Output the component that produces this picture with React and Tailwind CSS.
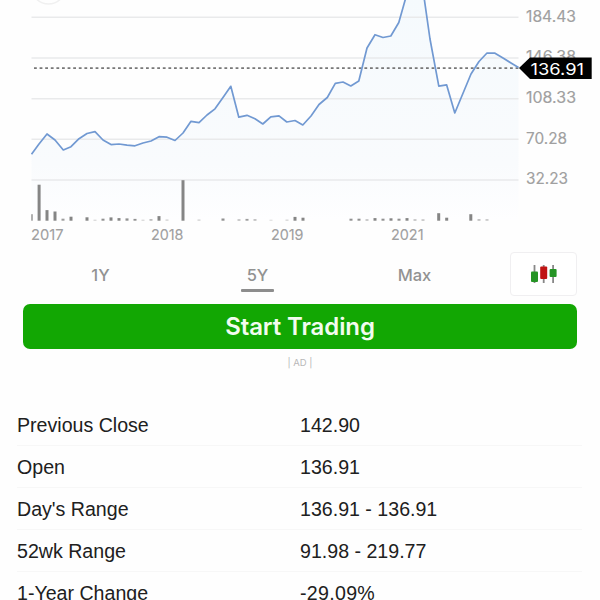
const line = [
  [31.5, 154.3], [39, 144], [47, 134], [55, 140], [63.3, 150], [71, 146.7], [79, 138.7], [87, 133.5],
  [95, 131.7], [103, 140], [111, 144.6], [119, 144], [127, 145.2], [135, 145.8], [143, 143], [151, 141],
  [159, 136.7], [167, 137.2], [175, 140.5], [183, 133], [191, 121.3], [199, 122.7], [207, 115], [215, 108.8],
  [223, 97.5], [230.8, 86.3], [238.8, 117.2], [247, 115.3], [255, 118.8], [262.8, 124], [270.8, 116.8],
  [279, 115.8], [286.8, 122], [295, 120.5], [302.8, 125], [311, 116], [319, 104.5], [327.3, 97.5],
  [335.3, 83.3], [343, 82], [350.8, 86], [358.8, 81], [367, 48], [375, 34.7], [383, 37.5], [390.8, 36],
  [398.8, 22.5], [406, -3], [424, -3], [430, 39], [438.8, 86.2], [446.6, 84.8], [454.8, 113], [471, 74],
  [479, 61.5], [487, 53], [495, 53.2], [503, 58], [511, 63], [518.5, 67.5],
];

// Volume bars as [x centre, height, opacity]
const bars = [
  [32, 6.5, 0.8], [39.1, 36, 1], [47, 10.6, 1], [55, 9.2, 1], [63, 2, 0.8], [71, 4, 1], [87, 3.4, 1],
  [95, 1, 0.4], [103, 2, 0.9], [111, 3.3, 1], [119, 2.6, 1], [127, 2.3, 0.9], [135, 1.8, 0.9],
  [143, 1, 0.4], [151, 1.6, 0.6], [159, 4.6, 1], [167, 1.2, 0.4], [183, 40.5, 1], [199, 1.2, 0.4],
  [223, 2.2, 0.9], [239, 1.4, 0.6], [247, 1.8, 0.8], [255, 1.5, 0.6], [271, 1, 0.3], [287, 1.1, 0.4],
  [295, 3.8, 1], [303, 3, 1], [351, 2, 0.9], [359, 2, 0.9], [367, 1.4, 0.6], [375, 2.6, 1],
  [383, 2, 0.9], [391, 2.4, 1], [399, 2, 0.9], [407, 2.6, 1], [415, 1.4, 0.6], [423, 1.3, 0.6],
  [438.7, 7.5, 1], [446.7, 3, 1], [470.8, 6.5, 1], [479, 1.5, 0.6], [487, 1.5, 0.5],
];

const gridLines = [17.2, 58, 98.7, 139.2, 180];
const prices = [
  ["184.43", 21.6, 50], ["146.38", 62.4, 50], ["108.33", 103, 50], ["70.28", 143.6, 41], ["32.23", 184.4, 42],
];
const years = [["2017", 31], ["2018", 151], ["2019", 271], ["2021", 391]];

const rows = [
  ["Previous Close", "142.90"],
  ["Open", "136.91"],
  ["Day's Range", "136.91 - 136.91"],
  ["52wk Range", "91.98 - 219.77"],
  ["1-Year Change", "-29.09%"],
];

const points = line.map((p) => p.join(",")).join(" ");

function Chart() {
  return (
    <svg width="600" height="250" viewBox="0 0 600 250" className="block shrink-0 font-['Inter',sans-serif]">
      <defs>
        <linearGradient id="area" x1="0" y1="0" x2="0" y2="1">
          <stop offset="0" stopColor="#f5fafd" />
          <stop offset="0.75" stopColor="#f9fbfd" />
          <stop offset="1" stopColor="#fefeff" />
        </linearGradient>
      </defs>
      <circle cx="48.5" cy="-13" r="17" fill="none" stroke="#f0f0f0" strokeWidth="1.5" />
      <polygon points={`31.5,220 ${points} 518.5,220`} fill="url(#area)" />
      {gridLines.map((y) => (
        <line key={y} x1="31.5" x2="518.5" y1={y} y2={y} stroke="#e9eaeb" strokeWidth="1.5" />
      ))}
      {bars.map(([x, h, o]) => (
        <rect key={x} x={x - (x === 32 ? 0.8 : 1.5)} y={220.7 - h} width={x === 32 ? 1.6 : 3} height={h} fill="#858585" opacity={o} />
      ))}
      <line x1="34" x2="519" y1="68.2" y2="68.2" stroke="#777" strokeWidth="1.7" strokeDasharray="2.8 2.8" />
      <polyline points={points} fill="none" stroke="#7199d2" strokeWidth="1.7" strokeLinejoin="round" />
      {prices.map(([t, y, w]) => (
        <text key={t} x="526" y={y} fontSize="15.5" fill="#a0a0a0" stroke="#a0a0a0" strokeWidth="0.15" textLength={w} lengthAdjust="spacingAndGlyphs">{t}</text>
      ))}
      <polygon points="519,68 530,57.5 591.7,57.5 591.7,79 530,79" fill="#000" />
      <text x="530.5" y="74.6" fontSize="16.5" fill="#fff" textLength="53.5" lengthAdjust="spacingAndGlyphs">136.91</text>
      {years.map(([t, x]) => (
        <text key={t} x={x} y="240.4" fontSize="14.3" fill="#a0a0a0" stroke="#a0a0a0" strokeWidth="0.1" textLength="32.5" lengthAdjust="spacingAndGlyphs">{t}</text>
      ))}
    </svg>
  );
}

function Candles() {
  return (
    <svg width="28" height="20" viewBox="0 0 28 20">
      <path d="M4.5 1v18M13.7 1v18M23.1 1v18" stroke="#888" strokeWidth="1.8" />
      <rect x="1" y="7.5" width="7" height="10.5" rx="1" fill="#259425" />
      <rect x="10.2" y="2.5" width="7" height="12.5" rx="1" fill="#c01414" />
      <rect x="19.6" y="5" width="7" height="8" rx="1" fill="#259425" />
    </svg>
  );
}

function Range({ label, active }) {
  return (
    <div className="flex w-[157px] flex-col items-center pt-[14px]">
      <span className="text-[16.5px] leading-[22px] font-medium text-[#929292]">{label}</span>
      {active && <span className="mt-[2.5px] h-[3px] w-[33px] rounded-[1px] bg-[#8d8d8d]" />}
    </div>
  );
}

export default function App() {
  return (
    <main className="flex h-[600px] w-[600px] flex-col overflow-hidden bg-[#fefefe] font-['Inter',sans-serif] antialiased">
      <Chart />
      <nav className="flex h-[54px] shrink-0 pl-[22px]">
        <Range label="1Y" />
        <Range label="5Y" active />
        <Range label="Max" />
        <button className="mt-[2px] ml-[17px] flex h-[44px] w-[67px] items-center justify-center rounded-[4px] border-[1.5px] border-[#f0eff1] bg-white">
          <Candles />
        </button>
      </nav>
      <button className="mx-[23px] flex h-[45px] shrink-0 items-center justify-center rounded-[7px] bg-[#12a703] text-[24px] font-semibold tracking-[-0.1px] text-[#f2fcef]">
        Start Trading
      </button>
      <div className="flex h-[55px] shrink-0 justify-center pt-[7px] text-[9.5px] leading-[13px] text-[#b5b5b5]">
        <span className="opacity-95">| AD |</span>
      </div>
      <dl className="ml-[17px] w-[565px] font-['Liberation_Sans',sans-serif] text-[19.6px] text-[#202020]">
        {rows.map(([name, value]) => (
          <div key={name} className="flex h-[42px] items-center border-b border-[#f7f7f7] pt-[2px]">
            <dt className="w-[283px]">{name}</dt>
            <dd className={value.endsWith("%") ? "tracking-[0.3px]" : ""}>{value}</dd>
          </div>
        ))}
      </dl>
    </main>
  );
}
